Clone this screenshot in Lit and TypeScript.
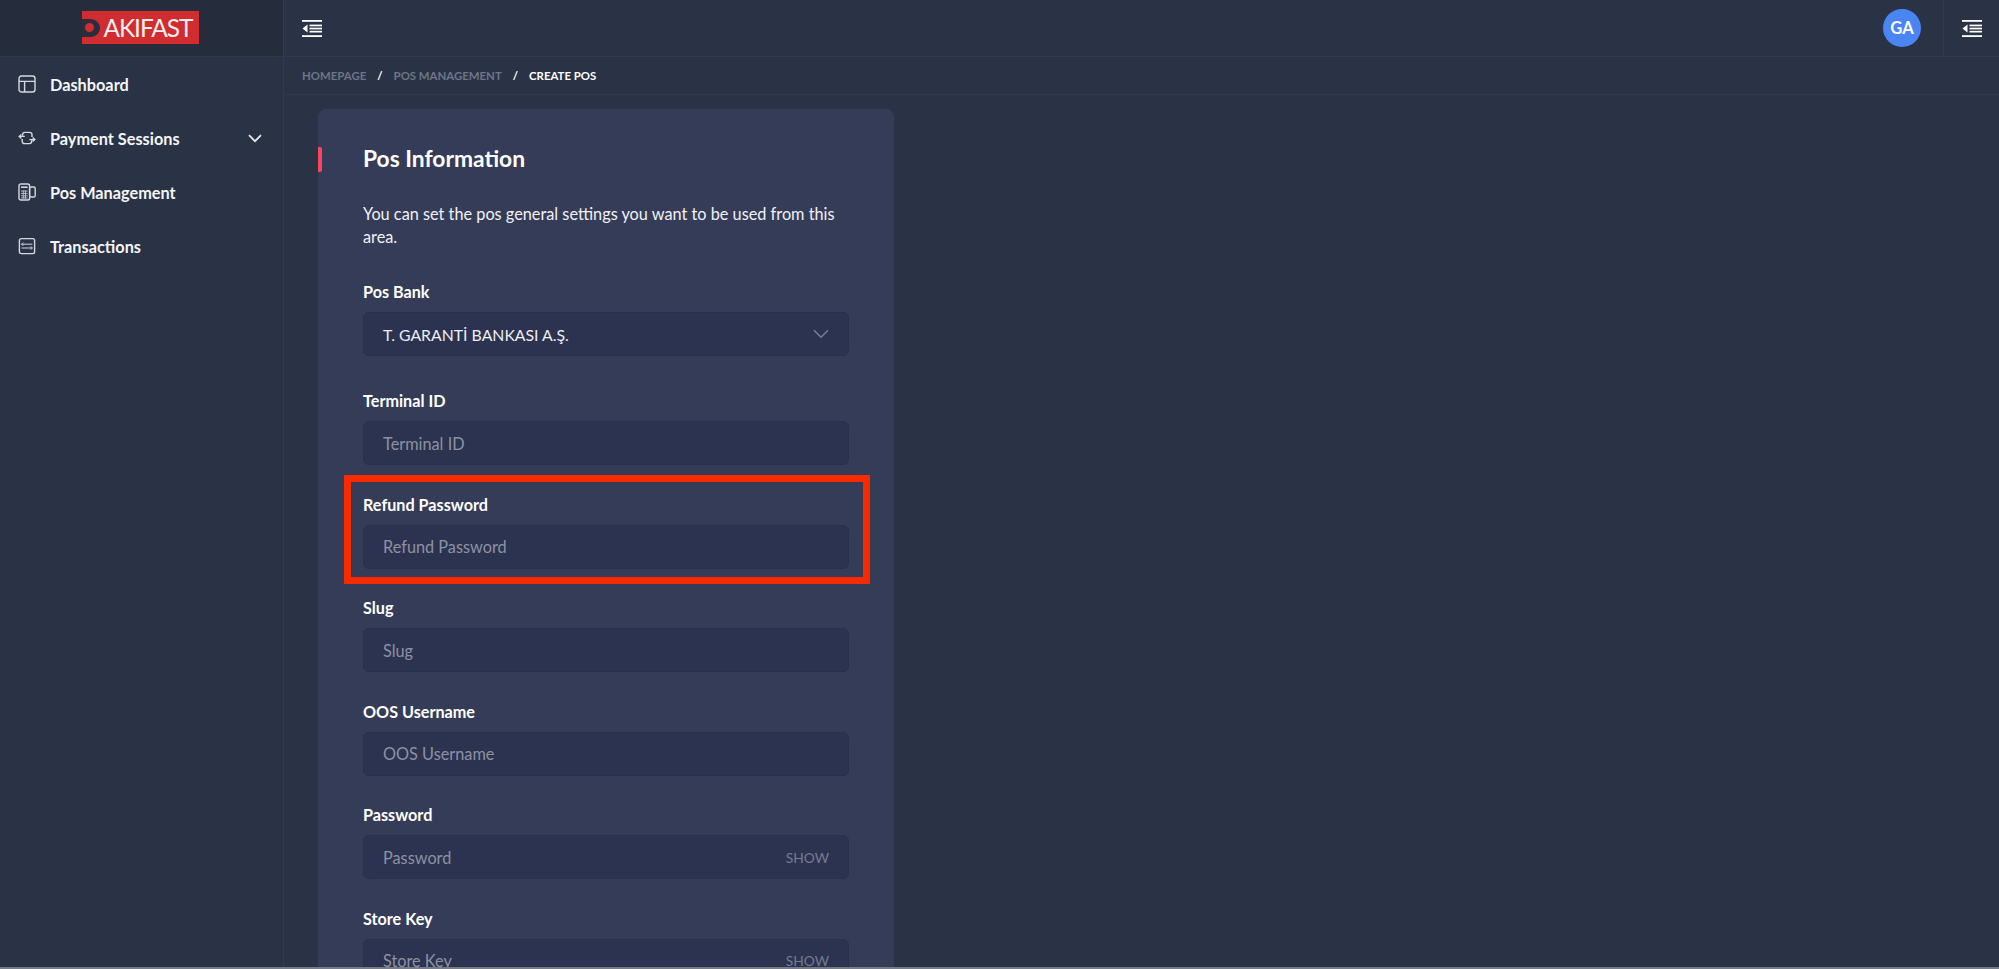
import { LitElement, html, css, svg } from "lit";
import { customElement } from "lit/decorators.js";

const indent = html`<svg class="indent" width="20" height="17" viewBox="0 0 20 17" fill="#fff">
  <rect x="0" y="0" width="20" height="1.8"/>
  <rect x="7.5" y="4.6" width="12.5" height="1.7"/>
  <rect x="7.5" y="7.7" width="12.5" height="1.7"/>
  <rect x="7.5" y="10.8" width="12.5" height="1.7"/>
  <rect x="0" y="15.2" width="20" height="1.8"/>
  <polygon points="0.5,8.5 5.5,4.6 5.5,12.4"/>
</svg>`;

const icons = {
  dash: svg`<rect x="1" y="1" width="16" height="16" rx="2.5"/><path d="M1 6.4H17M6.6 6.4V17"/>`,
  pay: svg`<path d="M4.6 6.8V5.4a2 2 0 0 1 2-2h5a2.4 2.4 0 0 1 2.4 2.4V8"/><path d="M13.6 11.2v1.4a2 2 0 0 1-2 2h-5A2.4 2.4 0 0 1 4.2 12.2V10"/><path d="M1.4 7.4h5.4M11.4 10.6h5.2"/><path d="M3.4 5.4 1.2 7.4l2.2 2M14.6 8.6l2.2 2-2.2 2"/>`,
  pos: svg`<rect x="1" y="1" width="10.6" height="16" rx="1.8"/><rect x="11.6" y="4" width="5.6" height="10" rx="1.6"/><path d="M3 4.2h6.6" stroke-width="1.6"/><path d="M3 8h6.6M3 10.4h6.6M3 12.8h6.6M3 15h6.6M5.2 7.5v8M7.4 7.5v8" stroke-width=".8"/>`,
  tx: svg`<rect x="1.4" y="1.6" width="15.2" height="15" rx="1.8"/><path d="M3.6 7.2h10.8M3.6 11h10.8" stroke-width="1"/><path d="M5.2 5.6 3.6 7.2l1.6 1.6M12.8 9.4l1.6 1.6-1.6 1.6" stroke-width="1"/>`,
};

const nav = [
  { label: "Dashboard", icon: icons.dash },
  { label: "Payment Sessions", icon: icons.pay, more: true },
  { label: "Pos Management", icon: icons.pos },
  { label: "Transactions", icon: icons.tx },
];

const fields = [
  { label: "Terminal ID" },
  { label: "Refund Password", marked: true },
  { label: "Slug" },
  { label: "OOS Username" },
  { label: "Password", show: true },
  { label: "Store Key", show: true },
];

@customElement("app-root")
export class AppRoot extends LitElement {
  static styles = css`
    :host { display: block; height: 100vh; overflow: hidden; background: #2a3346; font-family: Lato, "Open Sans", sans-serif; color: #fff; }
    * { box-sizing: border-box; }
    .page { height: 967px; display: grid; grid-template-columns: 284px 1fr; overflow: hidden; }
    .strip { height: 2px; background: #767b86; }
    .side { border-right: 1px solid #323b4e; }
    .brand { height: 57px; background: #252c3b; border-bottom: 1px solid #2f3748; display: flex; justify-content: center; padding: 11px 3px 0 0; }
    .logo { width: 117px; height: 33px; background: #d12c30; display: flex; align-items: center; overflow: hidden; }
    .d { width: 18px; height: 18px; background: #2a2d3c; border-radius: 0 9px 9px 0; display: flex; align-items: center; justify-content: center; flex: none; padding-right: 3px; }
    .d i { width: 9px; height: 9px; border-radius: 50%; background: #d12c30; }
    .logo span { font: 400 24.5px/33px Lato, sans-serif; letter-spacing: -1.1px; margin-left: 4px; color: #f6eeee; }
    .item { height: 54px; display: flex; align-items: center; padding: 0 0 0 18px; font-size: 16.3px; font-weight: 700; color: #f4f5f7; }
    .item svg.ic { width: 18px; height: 18px; fill: none; stroke: #d5d8de; stroke-width: 1.4; margin-right: 14px; flex: none; }
    .item .chev { margin-left: auto; margin-right: 21px; }
    .main { min-width: 0; }
    .top { height: 57px; border-bottom: 1px solid #323b4e; display: flex; align-items: center; padding-left: 18px; }
    .avatar { margin-left: auto; width: 38px; height: 38px; border-radius: 50%; background: #4a85f6; display: flex; align-items: center; justify-content: center; font: 700 16.5px Lato, sans-serif; }
    .action { width: 56px; height: 56px; margin-left: 22px; border-left: 1px solid #323b4e; display: flex; align-items: center; justify-content: center; }
    .crumbs { height: 38px; border-bottom: 1px solid #323b4e; display: flex; align-items: center; padding-left: 18px; font-size: 11.4px; font-weight: 700; color: #6e7587; text-transform: uppercase; }
    .crumbs b { color: #fff; margin: 0 11px; font-weight: 700; }
    .crumbs .now { color: #fff; }
    .content { padding: 14px 0 0 34px; }
    .card { width: 576px; height: 900px; background: #353c58; border-radius: 8px 8px 0 0; padding: 37px 45px 0; position: relative; }
    .card::before { content: ""; position: absolute; left: 0; top: 38px; width: 4px; height: 25px; background: #f9465c; border-radius: 0 2px 2px 0; }
    h1 { margin: 0 0 31px; font-size: 22.8px; line-height: 25px; font-weight: 700; }
    .desc { margin: 0 0 32px; font-size: 16.3px; line-height: 23px; color: #f0f1f5; }
    .field { margin-bottom: 27.6px; position: relative; }
    .field.first { margin-bottom: 33px; }
    label { display: block; font-size: 16.2px; font-weight: 700; line-height: 21px; margin-bottom: 10px; padding-top: 1px; }
    .input { height: 44px; background: #2c3350; border: 1px solid #2a3049; border-radius: 6px; display: flex; align-items: center; padding: 0 19px; font-size: 16.3px; color: #8c91a3; }
    .input.value { color: #eceef3; font-size: 15.8px; }
    .input .suffix { margin-left: auto; font-size: 13.8px; color: #757b90; }
    .input svg { margin-left: auto; }
    .mark { position: absolute; left: -19px; right: -21px; top: -18px; bottom: -15px; border: 7px solid #f72a00; pointer-events: none; }
  `;

  render() {
    return html`
      <div class="page">
        <aside class="side">
          <div class="brand">
            <div class="logo"><div class="d"><i></i></div><span>AKIFAST</span></div>
          </div>
          <nav>
            ${nav.map(n => html`<div class="item">
              <svg class="ic" viewBox="0 0 18 18">${n.icon}</svg>${n.label}
              ${n.more ? html`<svg class="chev" width="14" height="9" viewBox="0 0 14 9" fill="none" stroke="#e6e8ec" stroke-width="1.8"><path d="M1 1.2 7 7.2 13 1.2"/></svg>` : ""}
            </div>`)}
          </nav>
        </aside>
        <div class="main">
          <header class="top">
            ${indent}
            <div class="avatar">GA</div>
            <div class="action">${indent}</div>
          </header>
          <div class="crumbs"><span>Homepage</span><b>/</b><span>Pos Management</span><b>/</b><span class="now">Create Pos</span></div>
          <div class="content">
            <section class="card">
              <h1>Pos Information</h1>
              <p class="desc">You can set the pos general settings you want to be used from this area.</p>
              <div class="field first">
                <label>Pos Bank</label>
                <div class="input value">T. GARANTİ BANKASI A.Ş.
                  <svg width="16" height="10" viewBox="0 0 16 10" fill="none" stroke="#767d96" stroke-width="1.6"><path d="M1 1.2 8 8.2 15 1.2"/></svg>
                </div>
              </div>
              ${fields.map(f => html`<div class="field">
                <label>${f.label}</label>
                <div class="input">${f.label}${f.show ? html`<span class="suffix">SHOW</span>` : ""}</div>
                ${f.marked ? html`<div class="mark"></div>` : ""}
              </div>`)}
            </section>
          </div>
        </div>
      </div>
      <div class="strip"></div>
    `;
  }
}
